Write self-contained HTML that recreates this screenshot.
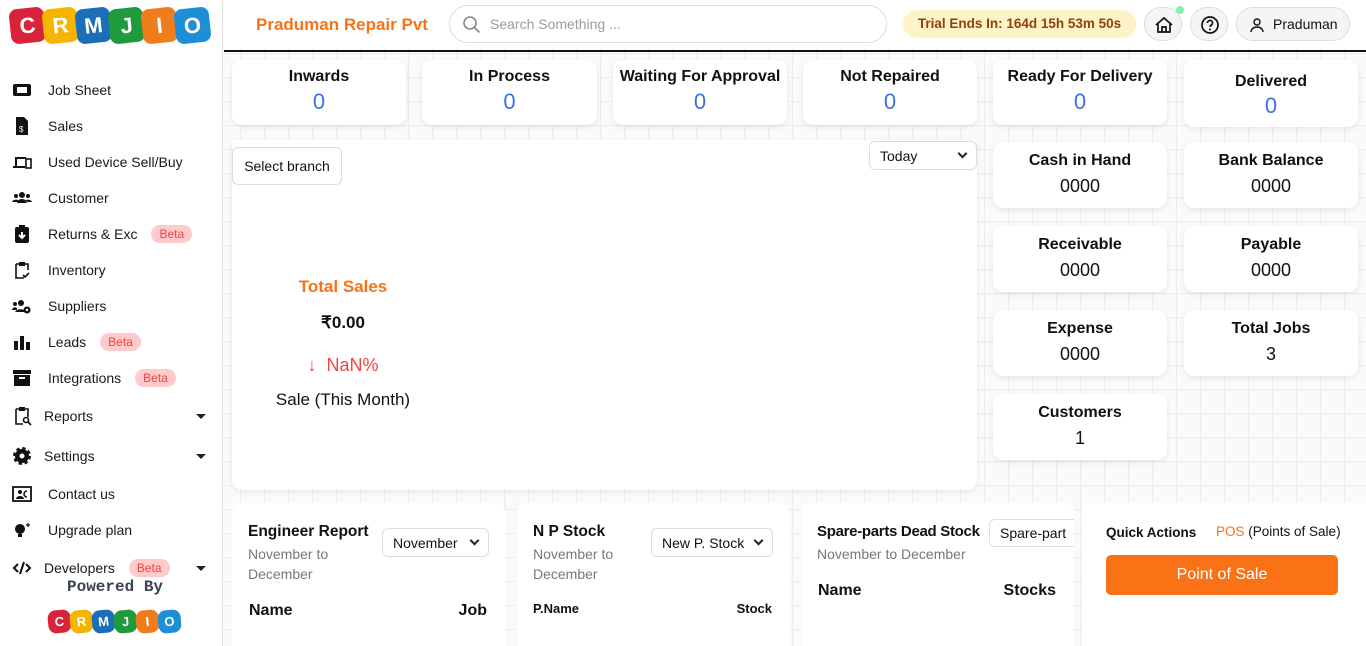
<!DOCTYPE html>
<html><head><meta charset="utf-8"><style>
*{box-sizing:border-box;margin:0;padding:0}
html{width:1366px;height:646px;overflow:hidden}
body{width:1366px;height:646px;overflow:hidden;font-family:"Liberation Sans",sans-serif;color:#111;position:relative;
background-color:#fafafa;background-image:linear-gradient(#ececec 1px,transparent 1px),linear-gradient(90deg,#ececec 1px,transparent 1px);background-size:24px 24px;background-position:0 5px}
.abs{position:absolute}
#side{left:0;top:0;width:223px;height:646px;background:#fff;border-right:1px solid #e5e5e5}
.logo{display:flex;gap:0}
.logo span{display:inline-flex;align-items:center;justify-content:center;color:#fff;font-weight:bold;border-radius:8px;transform:rotate(-6deg)}
.nav{position:absolute;left:12px;font-size:14px;display:flex;align-items:center;color:#1a1a1a}
.nav svg{width:20px;height:20px;margin-right:16px}
.beta{background:#fecaca;color:#ef4444;font-size:12px;border-radius:10px;padding:2px 8px;margin-left:14px}
.caret{position:absolute;left:196px;width:0;height:0;border-left:5px solid transparent;border-right:5px solid transparent;border-top:5px solid #222}
#hdr{left:224px;top:0;width:1142px;height:52px;background:#fff;border-bottom:2px solid #111}
.card{position:absolute;background:#fff;border-radius:10px;box-shadow:0 2px 6px rgba(0,0,0,.08);text-align:center}
.card b{display:block;font-size:16px;margin-top:8px}
.card .v{font-size:22px;color:#3b6ff0;margin-top:3px}
.card .w{font-size:18px;color:#111;margin-top:6px}
.sel{position:absolute;background:#fff;border:1px solid #ddd;border-radius:6px;font-size:14px;display:flex;align-items:center;padding:0 10px;justify-content:space-between}
.chev{width:7px;height:7px;border-right:2px solid #222;border-bottom:2px solid #222;transform:rotate(45deg);margin-top:-4px}
.bc{position:absolute;background:#fff;border-radius:10px 10px 0 0;top:503px;height:143px;overflow:hidden}
.bc h4{position:absolute;left:16px;top:20px;font-size:15.5px;white-space:nowrap}
.bc .sub{position:absolute;left:16px;top:41px;font-size:14px;color:#777;line-height:20px}
</style></head><body>
<div id="side" class="abs">
 <div class="abs logo" style="left:10px;top:8px">
  <span style="background:#d9233b;width:35px;height:35px;font-size:22px;margin-right:-2px">C</span><span style="background:#f5b400;width:35px;height:35px;font-size:22px;margin-right:-2px">R</span><span style="background:#1b6fb8;width:35px;height:35px;font-size:22px;margin-right:-2px">M</span><span style="background:#1f9a3c;width:35px;height:35px;font-size:22px;margin-right:-2px">J</span><span style="background:#f07d1b;width:35px;height:35px;font-size:22px;margin-right:-2px">I</span><span style="background:#1e8fd6;width:35px;height:35px;font-size:22px">O</span>
 </div>
 <div class="nav" style="top:80px"><svg viewBox="0 0 20 20"><rect x="1" y="4" width="18" height="12" rx="2" fill="#111"/><rect x="5" y="7" width="10" height="6" fill="#fff"/></svg>Job Sheet</div>
 <div class="nav" style="top:116px"><svg viewBox="0 0 20 20"><path d="M4 1h8l4 4v14H4z" fill="#111"/><text x="7" y="16" font-size="8" fill="#fff">$</text></svg>Sales</div>
 <div class="nav" style="top:152px"><svg viewBox="0 0 20 20"><path d="M3 5h11v2H5v7H3z M1 14h12v2H1z" fill="#111"/><rect x="14" y="7" width="5" height="9" fill="none" stroke="#111" stroke-width="1.6"/></svg>Used Device Sell/Buy</div>
 <div class="nav" style="top:188px"><svg viewBox="0 0 20 20"><circle cx="10" cy="7" r="3" fill="#111"/><circle cx="4" cy="8" r="2" fill="#111"/><circle cx="16" cy="8" r="2" fill="#111"/><path d="M5 15a5 4 0 0 1 10 0z M0 14a4 3 0 0 1 6-2v2z M20 14a4 3 0 0 0-6-2v2z" fill="#111"/></svg>Customer</div>
 <div class="nav" style="top:224px"><svg viewBox="0 0 20 20"><rect x="3" y="3" width="14" height="16" rx="2" fill="#111"/><rect x="7" y="1" width="6" height="4" fill="#111"/><path d="M10 8v5M7 11l3 3 3-3" stroke="#fff" stroke-width="2" fill="none"/></svg>Returns &amp; Exc<span class="beta">Beta</span></div>
 <div class="nav" style="top:260px"><svg viewBox="0 0 20 20"><path d="M4 4h12v6M4 4v14h8" stroke="#111" stroke-width="1.6" fill="none"/><rect x="7" y="2" width="6" height="4" fill="#111"/><path d="M11 15l2 2 4-4" stroke="#111" stroke-width="1.6" fill="none"/></svg>Inventory</div>
 <div class="nav" style="top:296px"><svg viewBox="0 0 20 20"><circle cx="9" cy="7" r="3" fill="#111"/><circle cx="3" cy="8" r="2" fill="#111"/><path d="M3 16a6 5 0 0 1 10-1v1z M0 14a3 3 0 0 1 5-2v2z" fill="#111"/><circle cx="15" cy="14" r="3.5" fill="#111"/><circle cx="15" cy="14" r="1.2" fill="#fff"/></svg>Suppliers</div>
 <div class="nav" style="top:332px"><svg viewBox="0 0 20 20"><rect x="2" y="9" width="4" height="9" fill="#111"/><rect x="8" y="4" width="4" height="14" fill="#111"/><rect x="14" y="10" width="4" height="8" fill="#111"/></svg>Leads<span class="beta">Beta</span></div>
 <div class="nav" style="top:368px"><svg viewBox="0 0 20 20"><rect x="1" y="2" width="18" height="4" fill="#111"/><rect x="2" y="7" width="16" height="11" fill="#111"/><rect x="7" y="9" width="6" height="2" fill="#fff"/></svg>Integrations<span class="beta">Beta</span></div>
 <div class="nav" style="top:406px"><svg viewBox="0 0 20 20" style="margin-right:12px"><path d="M4 3h12v8M4 3v15h7" stroke="#111" stroke-width="1.6" fill="none"/><rect x="7" y="1" width="6" height="4" fill="#111"/><circle cx="14" cy="14" r="2.5" stroke="#111" stroke-width="1.6" fill="none"/><path d="M16 16l3 3" stroke="#111" stroke-width="1.8"/></svg>Reports</div><div class="caret" style="top:414px"></div>
 <div class="nav" style="top:446px"><svg viewBox="0 0 20 20" style="margin-right:12px"><circle cx="10" cy="10" r="7" fill="#111" stroke="#111" stroke-width="4" stroke-dasharray="3 2.5"/><circle cx="10" cy="10" r="2.5" fill="#fff"/></svg>Settings</div><div class="caret" style="top:454px"></div>
 <div class="nav" style="top:484px"><svg viewBox="0 0 20 20"><rect x="1" y="3" width="18" height="14" fill="none" stroke="#111" stroke-width="1.8"/><circle cx="8" cy="8" r="2" fill="#111"/><path d="M4 15a4 3 0 0 1 8 0z" fill="#111"/><path d="M15 7a3 3 0 0 0 0 6" stroke="#111" stroke-width="1.5" fill="none"/></svg>Contact us</div>
 <div class="nav" style="top:520px"><svg viewBox="0 0 20 20"><circle cx="8" cy="9" r="5" fill="#111"/><rect x="6" y="14" width="4" height="3" fill="#111"/><path d="M16 3v4M14 5h4" stroke="#111" stroke-width="1.2"/></svg>Upgrade plan</div>
 <div class="nav" style="top:558px"><svg viewBox="0 0 20 20" style="margin-right:12px"><path d="M6 6l-4 4 4 4M14 6l4 4-4 4M12 4l-4 12" stroke="#111" stroke-width="2" fill="none"/></svg>Developers<span class="beta">Beta</span></div><div class="caret" style="top:566px"></div>
 <div class="abs" style="left:67px;top:578px;font-family:'Liberation Mono',monospace;font-weight:bold;font-size:16px;color:#3a4250">Powered By</div>
 <div class="abs logo" style="left:48px;top:610px">
  <span style="background:#d9233b;width:23px;height:23px;font-size:13px;margin-right:-1px">C</span><span style="background:#f5b400;width:23px;height:23px;font-size:13px;margin-right:-1px">R</span><span style="background:#1b6fb8;width:23px;height:23px;font-size:13px;margin-right:-1px">M</span><span style="background:#1f9a3c;width:23px;height:23px;font-size:13px;margin-right:-1px">J</span><span style="background:#f07d1b;width:23px;height:23px;font-size:13px;margin-right:-1px">I</span><span style="background:#1e8fd6;width:23px;height:23px;font-size:13px">O</span>
 </div>
</div>

<div id="hdr" class="abs">
 <div class="abs" style="left:32px;top:15px;color:#f97316;font-weight:bold;font-size:17px">Praduman Repair Pvt</div>
 <div class="abs" style="left:225px;top:5px;width:438px;height:38px;border:1px solid #ddd;border-radius:19px;background:#fff">
  <svg class="abs" style="left:12px;top:9px" width="20" height="20" viewBox="0 0 20 20"><circle cx="8" cy="8" r="6" fill="none" stroke="#888" stroke-width="1.6"/><path d="M12.5 12.5l5 5" stroke="#888" stroke-width="1.6"/></svg>
  <div class="abs" style="left:40px;top:10px;font-size:14px;color:#9a9a9a">Search Something ...</div>
 </div>
 <div class="abs" style="left:679px;top:10px;width:233px;height:28px;background:#fef3c7;border-radius:14px;color:#92400e;font-weight:bold;font-size:13.5px;text-align:center;line-height:28px">Trial Ends In: 164d 15h 53m 50s</div>
 <div class="abs" style="left:920px;top:7px;width:38px;height:34px;border:1px solid #ddd;border-radius:17px;background:#f5f5f5"><svg class="abs" style="left:9px;top:7px" width="20" height="20" viewBox="0 0 20 20"><path d="M2 10L10 3l8 7M4 8v9h12V8M8 17v-5h4v5" stroke="#111" stroke-width="1.7" fill="none"/></svg></div>
 <div class="abs" style="left:952px;top:6px;width:8px;height:8px;border-radius:4px;background:#86efac"></div>
 <div class="abs" style="left:966px;top:7px;width:38px;height:34px;border:1px solid #ddd;border-radius:17px;background:#f5f5f5"><svg class="abs" style="left:9px;top:7px" width="20" height="20" viewBox="0 0 20 20"><circle cx="10" cy="10" r="8" stroke="#111" stroke-width="1.7" fill="none"/><path d="M7.5 8a2.5 2.5 0 1 1 3 2.4V12" stroke="#111" stroke-width="1.7" fill="none"/><circle cx="10" cy="14.5" r="1" fill="#111"/></svg></div>
 <div class="abs" style="left:1012px;top:7px;width:114px;height:34px;border:1px solid #ddd;border-radius:17px;background:#f5f5f5;font-size:14px;line-height:32px;padding-left:36px">Praduman<svg class="abs" style="left:12px;top:9px" width="16" height="16" viewBox="0 0 16 16"><circle cx="8" cy="5" r="3" stroke="#111" stroke-width="1.4" fill="none"/><path d="M2 15a6 5 0 0 1 12 0" stroke="#111" stroke-width="1.4" fill="none"/></svg></div>
</div>

<div class="card" style="left:232px;top:60px;width:174px;height:65px"><b>Inwards</b><div class="v">0</div></div>
<div class="card" style="left:422px;top:60px;width:175px;height:65px"><b>In Process</b><div class="v">0</div></div>
<div class="card" style="left:613px;top:60px;width:174px;height:65px"><b>Waiting For Approval</b><div class="v">0</div></div>
<div class="card" style="left:803px;top:60px;width:174px;height:65px"><b>Not Repaired</b><div class="v">0</div></div>
<div class="card" style="left:993px;top:60px;width:174px;height:65px"><b>Ready For Delivery</b><div class="v">0</div></div>
<div class="card" style="left:1184px;top:60px;width:174px;height:67px"><b style="margin-top:13px">Delivered</b><div class="v" style="margin-top:2px">0</div></div>

<div class="abs" style="left:232px;top:140px;width:745px;height:350px;background:#fff;border-radius:0 0 10px 10px;box-shadow:0 2px 6px rgba(0,0,0,.08)"></div>
<div class="sel" style="left:232px;top:147px;width:110px;height:38px;justify-content:center">Select branch</div>
<div class="sel" style="left:869px;top:141px;width:108px;height:29px">Today<span class="chev"></span></div>
<div class="abs" style="left:232px;top:277px;width:222px;text-align:center">
 <div style="color:#f97316;font-weight:bold;font-size:17px">Total Sales</div>
 <div style="font-weight:bold;font-size:17px;margin-top:16px">₹0.00</div>
 <div style="color:#ef4444;font-size:18px;margin-top:22px">↓&nbsp; NaN%</div>
 <div style="font-size:17px;margin-top:14px">Sale (This Month)</div>
</div>

<div class="card" style="left:993px;top:142px;width:174px;height:66px"><b style="margin-top:10px">Cash in Hand</b><div class="w">0000</div></div>
<div class="card" style="left:1184px;top:142px;width:174px;height:66px"><b style="margin-top:10px">Bank Balance</b><div class="w">0000</div></div>
<div class="card" style="left:993px;top:226px;width:174px;height:66px"><b style="margin-top:10px">Receivable</b><div class="w">0000</div></div>
<div class="card" style="left:1184px;top:226px;width:174px;height:66px"><b style="margin-top:10px">Payable</b><div class="w">0000</div></div>
<div class="card" style="left:993px;top:310px;width:174px;height:66px"><b style="margin-top:10px">Expense</b><div class="w">0000</div></div>
<div class="card" style="left:1184px;top:310px;width:174px;height:66px"><b style="margin-top:10px">Total Jobs</b><div class="w">3</div></div>
<div class="card" style="left:993px;top:394px;width:174px;height:66px"><b style="margin-top:10px">Customers</b><div class="w">1</div></div>

<div class="bc" style="left:232px;width:273px"><h4>Engineer Report</h4><div class="sub">November to<br>December</div>
 <div class="sel" style="left:150px;top:25px;width:107px;height:29px">November<span class="chev"></span></div>
 <b class="abs" style="left:17px;top:99px;font-size:16px">Name</b><b class="abs" style="right:18px;top:99px;font-size:16px">Job</b></div>
<div class="bc" style="left:517px;width:272px"><h4>N P Stock</h4><div class="sub">November to<br>December</div>
 <div class="sel" style="left:134px;top:25px;width:122px;height:29px">New P. Stock<span class="chev"></span></div>
 <b class="abs" style="left:16px;top:98px;font-size:13px">P.Name</b><b class="abs" style="right:17px;top:98px;font-size:13px">Stock</b></div>
<div class="bc" style="left:801px;width:273px"><h4 style="font-size:15px;letter-spacing:-0.3px">Spare-parts Dead Stock</h4><div class="sub">November to December</div>
 <div class="sel" style="left:188px;top:16px;width:100px;height:28px;justify-content:flex-start">Spare-part</div>
 <b class="abs" style="left:17px;top:79px;font-size:16px">Name</b><b class="abs" style="right:18px;top:79px;font-size:16px">Stocks</b></div>
<div class="bc" style="left:1082px;width:284px;border-radius:10px 0 0 0">
 <b class="abs" style="left:24px;top:22px;font-size:13.5px">Quick Actions</b>
 <div class="abs" style="left:134px;top:21px;font-size:13.5px"><span style="color:#f97316">POS</span> (Points of Sale)</div>
 <div class="abs" style="left:24px;top:52px;width:232px;height:40px;background:#f97316;border-radius:5px;color:#fff;font-size:16px;text-align:center;line-height:40px">Point of Sale</div>
</div>
</body></html>
